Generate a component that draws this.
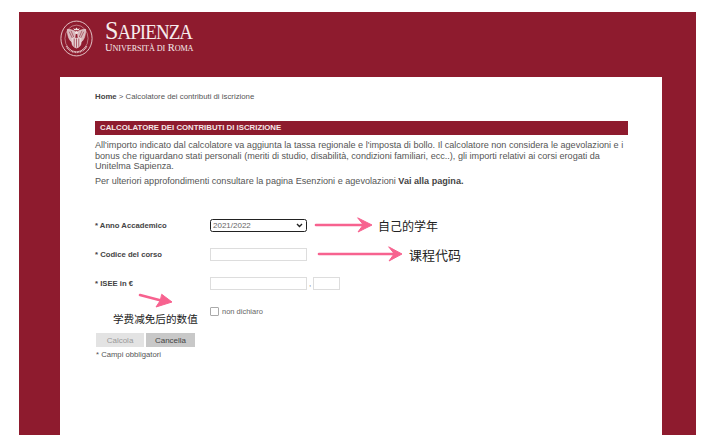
<div class="page">
  <div class="panel">
    <header class="brand">
      <svg class="seal" viewBox="0 0 36 40" width="33" height="39" fill="none" stroke="#f3e4e4">
        <ellipse cx="18" cy="20" rx="17" ry="19" stroke-width="0.9"/>
        <ellipse cx="18" cy="20" rx="12.6" ry="14.6" stroke-width="0.5"/>
        <path d="M14.5 8.5l1 2.4h5l1-2.4-2 1.3-1.5-1.9-1.5 1.9z" fill="#f3e4e4" stroke="none"/>
        <path d="M17 13c-2-2-5-3-9-3 0 5 1 11 5 14l3-2zM19 13c2-2 5-3 9-3 0 5-1 11-5 14l-3-2z" stroke-width="0.6" fill="#d9b9bd"/>
        <path d="M10 12.5l4 8M12 11.5l3 7M26 12.5l-4 8M24 11.5l-3 7" stroke="#8e1b2e" stroke-width="0.6"/>
        <path d="M13 19.5h10v6c0 2.5-2.5 4.2-5 5-2.5-.8-5-2.5-5-5z" fill="#e6d2d4" stroke-width="0.4"/>
        <path d="M15.5 20v9M18 20v10M20.5 20v9" stroke="#8e1b2e" stroke-width="0.7"/>
        <circle cx="18" cy="13.5" r="1.7" fill="#f3e4e4" stroke="none"/>
        <path d="M7 28.5c2.5 4 6.5 6.500 11 6.500s8.500-2.500 11-6.500" stroke-width="2" stroke-dasharray="1 .7" opacity=".85"/>
      </svg>
      <div class="wordmark">
        <div class="name">S<span>APIENZA</span></div>
        <div class="sub">U<span>NIVERSITÀ DI</span> R<span>OMA</span></div>
      </div>
    </header>

    <main class="card">
      <nav class="crumbs"><b>Home</b> &gt; Calcolatore dei contributi di iscrizione</nav>
      <h1 class="title">CALCOLATORE DEI CONTRIBUTI DI ISCRIZIONE</h1>
      <p class="intro">All'importo indicato dal calcolatore va aggiunta la tassa regionale e l'imposta di bollo. Il calcolatore non considera le agevolazioni e i bonus che riguardano stati personali (meriti di studio, disabilità, condizioni familiari, ecc..), gli importi relativi ai corsi erogati da Unitelma Sapienza.</p>
      <p class="more">Per ulteriori approfondimenti consultare la pagina Esenzioni e agevolazioni <b>Vai alla pagina.</b></p>

      <form class="form">
        <div class="row">
          <label for="anno">* Anno Accademico</label>
          <select id="anno"><option>2021/2022</option></select>
          <span class="note n1">自己的学年</span>
        </div>
        <div class="row">
          <label for="codice">* Codice del corso</label>
          <input id="codice" class="wide" />
          <span class="note n2">课程代码</span>
        </div>
        <div class="row">
          <label for="isee">* ISEE in €</label>
          <input id="isee" class="wide" />
          <span class="comma">,</span>
          <input class="cents" aria-label="centesimi" />
        </div>
        <div class="row check">
          <span class="note n3">学费减免后的数值</span>
          <span class="box"></span>
          <span class="nd">non dichiaro</span>
        </div>
        <div class="buttons">
          <span class="btn off">Calcola</span>
          <span class="btn">Cancella</span>
        </div>
        <div class="req">* Campi obbligatori</div>
      </form>

      <svg class="arrows" width="602" height="358" viewBox="0 0 602 358" fill="#f7628f" stroke="#f7628f" stroke-linecap="round" stroke-linejoin="round">
        <path d="M256 148H305" stroke-width="2.6" fill="none"/>
        <path d="M298 141L312 148L298 155L303 148z" stroke-width="1"/>
        <path d="M259 177H335" stroke-width="2.6" fill="none"/>
        <path d="M329 170L342 177L329 184L334 177z" stroke-width="1"/>
        <path d="M80 218L103 224" stroke-width="2.6" fill="none"/>
        <path d="M102 217.5L112 225L96 230L100 224z" stroke-width="1"/>
      </svg>
    </main>
  </div>
</div>

<style>
  :global(body) { margin: 0; background: #fff; }
  .page {
    width: 709px;
    height: 444px;
    box-sizing: border-box;
    padding: 12px 13px 9px 19px;
    overflow: hidden;
    font-family: "Liberation Sans", Arial, sans-serif;
    color: #444;
  }
  .panel {
    width: 677px;
    height: 423px;
    background: #8e1b2e;
    padding: 6px 34px 0 41px;
    box-sizing: border-box;
    display: flex;
    flex-direction: column;
  }
  .brand { display: flex; align-items: center; gap: 12px; height: 40px; margin-bottom: 19px; }
  .seal { flex: none; }
  .wordmark { font-family: "Liberation Serif", serif; color: #f6ecec; padding-bottom: 2px; }
  .name { font-size: 26px; line-height: 21px; letter-spacing: -1px; transform: scaleX(0.925); transform-origin: left center; }
  .name span { font-size: 20.5px; }
  .sub { font-size: 10.5px; line-height: 10px; letter-spacing: -0.1px; }
  .sub span { font-size: 8.2px; }
  .card {
    position: relative;
    flex: 1;
    background: #fff;
    padding: 15px 34px 0 35px;
    box-sizing: border-box;
  }
  .crumbs { font-size: 7.8px; line-height: 10px; color: #555; margin-bottom: 19px; }
  .crumbs b { color: #444; }
  .title {
    margin: 0;
    height: 14px;
    line-height: 14px;
    padding-left: 5px;
    background: #8e1b2e;
    color: #f5e6e6;
    font-size: 7.8px;
    font-weight: bold;
  }
  .intro { margin: 5px 0 0; font-size: 9.1px; line-height: 10.6px; color: #555; }
  .more { margin: 4px 0 0; font-size: 9.1px; line-height: 11px; color: #555; }
  .more b { color: #444; }
  .form { margin-top: 32px; font-size: 8px; }
  .row { display: flex; align-items: center; height: 14px; margin-bottom: 15px; }
  .row label { width: 115px; flex: none; font-weight: bold; font-size: 7.7px; color: #444; }
  select {
    appearance: none;
    width: 97px;
    height: 13px;
    padding: 0 0 0 2px;
    font: 8px "Liberation Sans", sans-serif;
    color: #666;
    background: #fff url("data:image/svg+xml,%3Csvg xmlns='http://www.w3.org/2000/svg' width='7' height='5'%3E%3Cpath d='M1 1l2.5 2.5L6 1' fill='none' stroke='%23222' stroke-width='1.4'/%3E%3C/svg%3E") no-repeat right 3px center;
    border: 1.5px solid #222;
    border-radius: 2.5px;
    box-sizing: border-box;
  }
  input {
    height: 13px;
    box-sizing: border-box;
    padding: 0;
    border: 1px solid #ddd;
    background: #fff;
  }
  .wide { width: 97px; }
  .cents { width: 27px; }
  .comma { width: 6px; text-align: center; color: #777; font-size: 8px; }
  .note { font-family: "Noto Sans CJK SC", "Liberation Sans", sans-serif; color: #222; font-size: 12px; }
  .n1 { margin-left: 71px; }
  .n2 { margin-left: 102px; font-size: 13px; }
  .check { height: 12px; margin-top: 0; margin-bottom: 0; }
  .n3 { width: 115px; padding-left: 18px; box-sizing: border-box; font-size: 10.6px; white-space: nowrap; position: relative; top: 7px; }
  .box { width: 7px; height: 7px; border: 1px solid #aaa; border-radius: 1px; background: #fff; margin-right: 3px; }
  .nd { font-size: 7.5px; color: #666; }
  .buttons { display: flex; gap: 2px; margin: 15px 0 0 1px; }
  .btn {
    width: 49px;
    height: 14px;
    line-height: 15px;
    text-align: center;
    background: #c8c8c8;
    color: #444;
    font-size: 8px;
  }
  .btn.off { width: 48px; background: #e3e3e3; color: #999; }
  .req { margin: 3px 0 0 1px; font-size: 7.7px; line-height: 9px; color: #555; }
  .arrows { position: absolute; left: 0; top: 0; pointer-events: none; }
</style>
